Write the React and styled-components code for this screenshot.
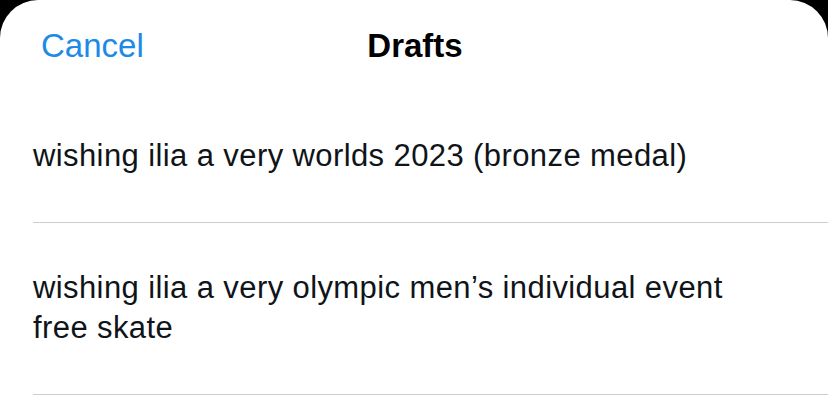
import React from 'react';
import styled, { createGlobalStyle } from 'styled-components';

const Global = createGlobalStyle`
    html, body {
        margin: 0;
        padding: 0;
        background: #000;
    }
    body {
        font-family: "Liberation Sans", Arial, sans-serif;
    }
`;

const Sheet = styled.div`
    background: #fff;
    border-radius: 38px 38px 0 0;
    min-height: 419px;
    overflow: hidden;
`;

const Header = styled.header`
    height: 91px;
    display: grid;
    grid-template-columns: 1fr auto 1fr;
    align-items: center;
    padding: 0 41px;
`;

const CancelButton = styled.button`
    justify-self: start;
    background: none;
    border: none;
    padding: 0;
    font-family: inherit;
    font-size: 33px;
    line-height: 1;
    color: #1d8ae6;
    cursor: pointer;
`;

const Title = styled.h1`
    margin: 0;
    font-size: 33px;
    line-height: 1;
    font-weight: bold;
    color: #000;
    transform: translateX(1px);
`;

const List = styled.ul`
    list-style: none;
    margin: 0;
    padding: 0;
`;

const DraftItem = styled.li`
    margin-left: 33px;
    padding: 45px 60px 46px 0;
    border-bottom: 1.5px solid #cdcdcd;
    font-size: 31px;
    line-height: 40px;
    letter-spacing: 0.4px;
    color: #0f1419;
`;

const drafts = [
    'wishing ilia a very worlds 2023 (bronze medal)',
    'wishing ilia a very olympic men\u2019s individual event free skate',
];

export default function App() {
    return (
        <>
            <Global />
            <Sheet>
                <Header>
                    <CancelButton>Cancel</CancelButton>
                    <Title>Drafts</Title>
                    <span />
                </Header>
                <List>
                    {drafts.map((d) => (
                        <DraftItem key={d}>{d}</DraftItem>
                    ))}
                </List>
            </Sheet>
        </>
    );
}
